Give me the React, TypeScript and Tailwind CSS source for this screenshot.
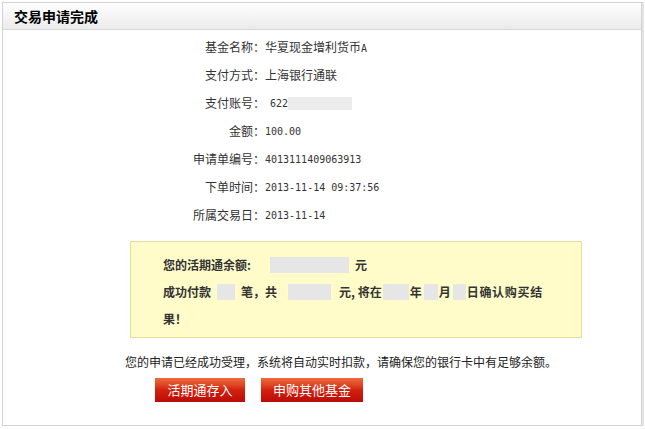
import React from "react";

const cjk = "font-['SimSun','Noto_Sans_CJK_SC',sans-serif]";
const mono = "font-['DejaVu_Sans_Mono',monospace] text-[10px]";

const rows: { label: string; value: React.ReactNode }[] = [
  { label: "基金名称", value: <span>华夏现金增利货币<span className={mono}>A</span></span> },
  { label: "支付方式", value: "上海银行通联" },
  {
    label: "支付账号",
    value: (
      <span className="flex items-center">
        <span className={`${mono} ml-[5px]`}>622</span>
        <span className="inline-block w-[64px] h-[13px] bg-[#ececec]" />
      </span>
    ),
  },
  { label: "金额", value: <span className={mono}>100.00</span> },
  { label: "申请单编号", value: <span className={mono}>4013111409063913</span> },
  { label: "下单时间", value: <span className={mono}>2013-11-14 09:37:56</span> },
  { label: "所属交易日", value: <span className={mono}>2013-11-14</span> },
];

function Gray({ w }: { w: number }) {
  return <span className="inline-block h-[16px] bg-[#e6e6e6] align-middle" style={{ width: w }} />;
}

export default function App() {
  return (
    <div className={`w-[645px] h-[429px] bg-white pt-[2px] pl-[2px] ${cjk} text-[12px] text-[#333]`}>
      <div className="w-[640px] h-[424px] border border-[#d3d3d3] flex flex-col shadow-[2px_0_0_#e4e4e4]">
        <div className="h-[27px] shrink-0 border-b border-[#d6d6d6] bg-gradient-to-b from-white to-[#ebebeb] flex items-center pl-[11px]">
          <span className="text-[14px] font-bold text-black">交易申请完成</span>
        </div>
        <div className="pt-[3px] flex flex-col">
          {rows.map((r) => (
            <div key={r.label} className="h-[28px] flex items-center">
              <div className="w-[262px] text-right shrink-0">{r.label}：</div>
              <div className="flex items-center">{r.value}</div>
            </div>
          ))}
        </div>
        <div className="mt-[12px] ml-[127px] w-[452px] h-[97px] border border-[#e6dd9c] bg-[#fffcca] pt-[9px] pl-[32px] font-bold text-[#333] leading-[27px]">
          <div className="flex items-center h-[27px]">
            <span>您的活期通余额:</span>
            <span className="ml-[19px] flex"><Gray w={79} /></span>
            <span className="ml-[6px]">元</span>
          </div>
          <div className="flex items-center h-[27px] whitespace-nowrap">
            <span>成功付款</span>
            <span className="ml-[6px] flex"><Gray w={18} /></span>
            <span className="ml-[6px]">笔，共</span>
            <span className="ml-[11px] flex"><Gray w={43} /></span>
            <span className="ml-[8px]">元, 将在</span>
            <span className="ml-[1px] flex"><Gray w={26} /></span>
            <span className="ml-[1px]">年</span>
            <span className="ml-[2px] flex"><Gray w={14} /></span>
            <span className="ml-[1px]">月</span>
            <span className="ml-[2px] flex"><Gray w={13} /></span>
            <span className="ml-[1px] tracking-[0.7px]">日确认购买结</span>
          </div>
          <div className="flex items-center h-[27px]">
            <span>果！</span>
          </div>
        </div>
        <div className="mt-[14px] ml-[122px] leading-[20px] text-[#222]">
          您的申请已经成功受理，系统将自动实时扣款，请确保您的银行卡中有足够余额。
        </div>
        <div className="mt-[6px] ml-[152px] flex gap-[16px]">
          <button className="w-[90px] h-[24px] bg-gradient-to-b from-[#ef6a3c] via-[#d2200e] to-[#bb0a06] text-white text-[13px] flex items-center justify-center">
            活期通存入
          </button>
          <button className="w-[102px] h-[24px] bg-gradient-to-b from-[#ef6a3c] via-[#d2200e] to-[#bb0a06] text-white text-[13px] flex items-center justify-center">
            申购其他基金
          </button>
        </div>
      </div>
    </div>
  );
}
